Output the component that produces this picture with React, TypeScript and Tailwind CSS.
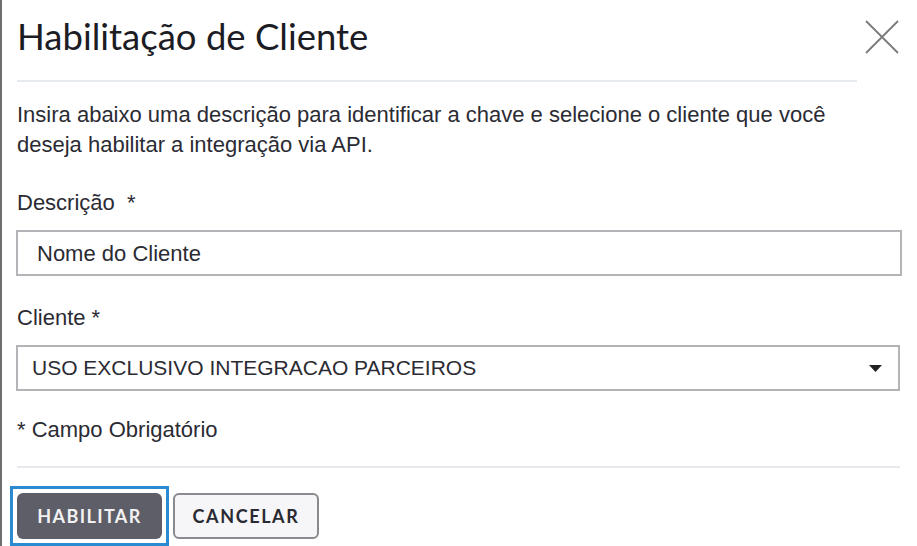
import React from "react";

export default function App() {
  return (
    <div className="w-[917px] h-[546px] bg-white border-l-2 border-[#6e6e6e] overflow-hidden relative">
      <div className="pl-[15px] pr-[15px]">
        <div className="flex items-start justify-between h-[80px]">
          <h1 className="pt-[14px] text-[36.5px] leading-[44px] text-[#1c1c24] font-['Lato',sans-serif]">
            Habilitação de Cliente
          </h1>
          <button className="mt-[20px] mr-[3px] w-[34px] h-[34px] flex items-center justify-center">
            <svg width="34" height="34" viewBox="0 0 34 34">
              <path d="M1 1 L33 33 M33 1 L1 33" stroke="#7a7a7a" strokeWidth="1.8" fill="none" />
            </svg>
          </button>
        </div>
        <div className="h-[2px] bg-[#e6e9ed] w-[840px]" />
        <div className="font-['Liberation_Sans',Arial,sans-serif] text-[#2b2b33]">
          <p className="mt-[18px] text-[22px] leading-[30px] w-[840px]">
            Insira abaixo uma descrição para identificar a chave e selecione o cliente que você deseja habilitar a integração via API.
          </p>
          <div className="mt-[28px] text-[22px] leading-[30px]">
            Descrição <span className="ml-[6px]">*</span>
          </div>
          <div className="mt-[12px] w-[886px] -ml-[1px] h-[46px] border-2 border-[#b4b4b8] flex items-center pl-[19px] text-[22px] text-[#2b2b33]">
            Nome do Cliente
          </div>
          <div className="mt-[27px] text-[22px] leading-[30px]">
            Cliente *
          </div>
          <div className="mt-[12px] w-[884px] -ml-[1px] h-[46px] border-2 border-[#b4b4b8] flex items-center justify-between pl-[14px] pr-[16px] text-[21px] text-[#2b2b33]">
            <span>USO EXCLUSIVO INTEGRACAO PARCEIROS</span>
            <svg width="13" height="7" viewBox="0 0 13 7">
              <path d="M0 0 H13 L6.5 7 Z" fill="#222" />
            </svg>
          </div>
          <div className="mt-[24px] text-[22px] leading-[30px]">* Campo Obrigatório</div>
        </div>
        <div className="mt-[21px] h-[2px] bg-[#e6e9ed] w-[883px]" />
        <div className="mt-[18px] flex items-start gap-[4px] -ml-[7px]">
          <div className="border-[3px] border-[#2a8bd0] p-[4px]">
            <button className="w-[145px] h-[46px] rounded-[6px] bg-[#5e5e68] text-[#f2f2f2] font-['Lato',sans-serif] font-bold text-[18px] tracking-[1.4px]">
              HABILITAR
            </button>
          </div>
          <button className="mt-[7px] w-[146px] h-[46px] rounded-[6px] bg-[#f6f6f8] border-2 border-[#8a8a8e] text-[#2a2a33] font-['Lato',sans-serif] font-bold text-[18px] tracking-[1.6px]">
            CANCELAR
          </button>
        </div>
      </div>
    </div>
  );
}
